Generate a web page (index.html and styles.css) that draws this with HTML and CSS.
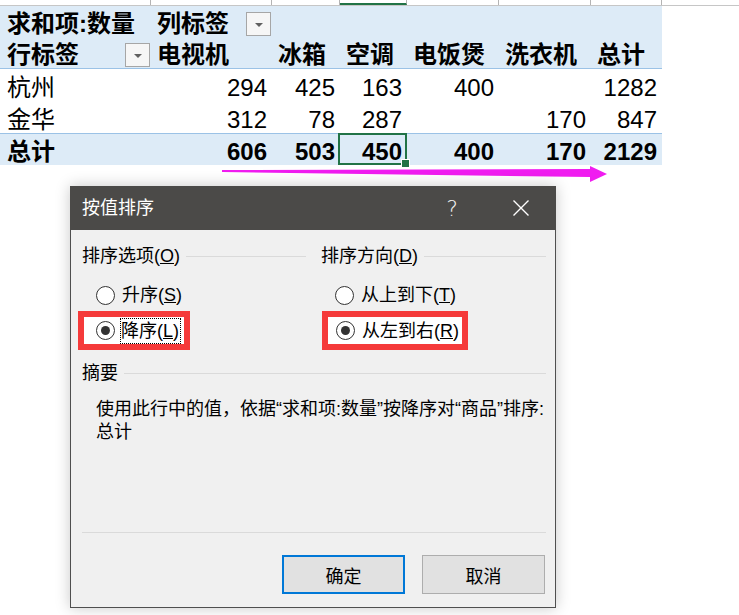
FILE: index.html
```html
<!DOCTYPE html>
<html lang="zh-CN">
<head>
<meta charset="utf-8">
<title>按值排序</title>
<link rel="stylesheet" href="styles.css">
</head>
<body>
<div class="sheet">
  <div class="colheads">
    <div></div><div></div><div></div><div class="sel"></div><div></div><div></div><div></div><div class="last"></div>
  </div>
  <div class="pivot">
    <div class="prow blue first">
      <div class="cell b">求和项:数量</div>
      <div class="cell b ddcell">列标签<span class="dd"></span></div>
      <div class="cell"></div><div class="cell"></div><div class="cell"></div><div class="cell"></div><div class="cell"></div>
    </div>
    <div class="prow blue hdr">
      <div class="cell b ddcell">行标签<span class="dd"></span></div>
      <div class="cell b">电视机</div>
      <div class="cell b">冰箱</div>
      <div class="cell b">空调</div>
      <div class="cell b">电饭煲</div>
      <div class="cell b">洗衣机</div>
      <div class="cell b">总计</div>
    </div>
    <div class="prow">
      <div class="cell">杭州</div>
      <div class="cell num">294</div>
      <div class="cell num">425</div>
      <div class="cell num">163</div>
      <div class="cell num">400</div>
      <div class="cell num"></div>
      <div class="cell num">1282</div>
    </div>
    <div class="prow">
      <div class="cell">金华</div>
      <div class="cell num">312</div>
      <div class="cell num">78</div>
      <div class="cell num">287</div>
      <div class="cell num"></div>
      <div class="cell num">170</div>
      <div class="cell num">847</div>
    </div>
    <div class="prow blue total">
      <div class="cell">总计</div>
      <div class="cell num">606</div>
      <div class="cell num">503</div>
      <div class="cell num active">450</div>
      <div class="cell num">400</div>
      <div class="cell num">170</div>
      <div class="cell num">2129</div>
    </div>
  </div>
</div>

<svg class="arrow" width="739" height="200" viewBox="0 0 739 200" aria-hidden="true">
  <polygon points="222,170 590,169 590,166 607,174 590,182 590,177 222,172" fill="#f01cf0"/>
</svg>

<div class="dialog">
  <div class="titlebar">
    <span class="title">按值排序</span>
    <span class="help">?</span>
    <span class="close">
      <svg width="18" height="18" viewBox="0 0 18 18"><path d="M1.5 1.5 L16.5 16.5 M16.5 1.5 L1.5 16.5" stroke="#fff" stroke-width="1.4" fill="none"/></svg>
    </span>
  </div>
  <div class="dbody">
    <div class="groups">
      <div class="group">
        <div class="ghead">排序选项(<u>O</u>)</div>
        <div class="radios">
          <div class="radio"><span class="circle"></span><span class="lbl">升序(<u>S</u>)</span></div>
          <div class="radio marked left-mark"><span class="circle on"></span><span class="lbl focus">降序(<u>L</u>)</span></div>
        </div>
      </div>
      <div class="group">
        <div class="ghead">排序方向(<u>D</u>)</div>
        <div class="radios">
          <div class="radio"><span class="circle"></span><span class="lbl">从上到下(<u>T</u>)</span></div>
          <div class="radio marked right-mark"><span class="circle on"></span><span class="lbl">从左到右(<u>R</u>)</span></div>
        </div>
      </div>
    </div>
    <div class="ghead sumhead">摘要</div>
    <div class="desc">
      <div>使用此行中的值，依据“求和项:数量”按降序对“商品”排序:</div>
      <div>总计</div>
    </div>
    <div class="sep"></div>
    <div class="buttons">
      <div class="btn primary">确定</div>
      <div class="btn">取消</div>
    </div>
  </div>
</div>
</body>
</html>
```

FILE: styles.css
```css
* { box-sizing: border-box; }

body {
  margin: 0;
  width: 739px;
  height: 615px;
  overflow: hidden;
  position: relative;
  background: #fff;
  font-family: "Liberation Sans", "Noto Sans CJK SC", sans-serif;
  color: #000;
}

.colheads {
  display: grid;
  grid-template-columns: 151px 121px 68px 67px 92px 92px 71px 1fr;
  height: 6px;
  border-bottom: 1px solid #c6c6c6;
  background: #fff;
}
.colheads > div { border-right: 1px solid #b4b4b4; }
.colheads > .last { border-right: 0; }
.colheads > .sel { border-bottom: 2px solid #217346; }

.pivot {
  width: 662px;
  font-size: 24px;
}

.prow {
  display: grid;
  grid-template-columns: 151px 121px 68px 67px 92px 92px 71px;
  height: 32px;
}
.prow.blue { background: #ddebf7; }
.prow.first { height: 31px; }
.prow.hdr { border-bottom: 1px solid #9bc2e6; }
.prow.total { border-top: 1px solid #9bc2e6; height: 32px; font-weight: bold; }

.cell {
  display: flex;
  align-items: flex-end;
  padding: 0 6px 0 6px;
  line-height: 26px;
  white-space: nowrap;
  position: relative;
}
.prow .cell:first-child { padding-left: 7px; }
.cell.b { font-weight: bold; }
.cell.num { justify-content: flex-end; padding-right: 5px; }

.ddcell { padding-right: 1px; }
.dd {
  margin-left: auto;
  align-self: flex-end;
  width: 25px;
  height: 24px;
  margin-bottom: 1px;
  border: 1px solid #a6a6a6;
  background: #f6f6f6;
  display: flex;
  align-items: center;
  justify-content: center;
}
.dd::after {
  content: "";
  border-left: 4px solid transparent;
  border-right: 4px solid transparent;
  border-top: 4px solid #606060;
  margin-top: 1px;
}

.cell.active::after {
  content: "";
  position: absolute;
  left: -2px;
  top: -1px;
  right: 0;
  bottom: 0;
  border: 2px solid #217346;
}
.cell.active::before {
  content: "";
  position: absolute;
  right: -3px;
  bottom: -3px;
  width: 7px;
  height: 7px;
  background: #217346;
  border: 1px solid #fff;
  z-index: 2;
}

.arrow {
  position: absolute;
  left: 0;
  top: 0;
  pointer-events: none;
}

.dialog {
  position: absolute;
  left: 70px;
  top: 186px;
  width: 486px;
  box-shadow: 0 0 14px rgba(0, 0, 0, 0.22);
  font-size: 18px;
}

.titlebar {
  height: 44px;
  background: #4b4a48;
  color: #fff;
  display: flex;
  align-items: center;
  padding-left: 12px;
}
.title { flex: 1; line-height: 24px; }
.help {
  width: 40px;
  text-align: center;
  margin-right: 26px;
  font-size: 22px;
  font-family: "DejaVu Sans", "Liberation Sans", sans-serif;
  font-weight: 300;
  color: #f2f2f2;
}
.close {
  width: 46px;
  margin-right: 12px;
  display: flex;
  justify-content: center;
  align-items: center;
}

.dbody {
  background: #f0f0f0;
  border: 1px solid #4f4f4f;
  border-top: 0;
  padding: 14px 9px 13px 11px;
}

.groups {
  display: grid;
  grid-template-columns: 224px 225px;
  column-gap: 15px;
}

.ghead {
  display: flex;
  align-items: center;
  height: 24px;
  line-height: 24px;
  white-space: nowrap;
}
.ghead::after {
  content: "";
  flex: 1;
  height: 1px;
  background: #dadada;
  margin-left: 6px;
}

.radios { margin-top: 9px; }

.radio {
  display: flex;
  align-items: center;
  height: 36px;
  padding-left: 14px;
  line-height: 24px;
  white-space: nowrap;
}
.circle {
  width: 19px;
  height: 19px;
  border-radius: 50%;
  border: 1px solid #333;
  background: #fff;
  margin-right: 7px;
  display: flex;
  align-items: center;
  justify-content: center;
  flex: none;
}
.circle.on::after {
  content: "";
  width: 9px;
  height: 9px;
  border-radius: 50%;
  background: #333;
}

.radio.marked {
  width: fit-content;
  height: 39px;
  margin-top: -2px;
  border: 6px solid #f53a3a;
  background: #fff;
}
.left-mark { margin-left: -4px; padding-left: 12px; padding-right: 4px; }
.right-mark { margin-left: 1px; padding-left: 8px; padding-right: 3px; }

.lbl.focus {
  outline: 1px dotted #000;
  padding: 0 1px 0 0;
  margin-left: -1px;
}

.sumhead { margin-top: 11px; }

.desc {
  margin-top: 13px;
  padding-left: 14px;
  line-height: 23px;
  white-space: nowrap;
}

.sep {
  margin-top: 88px;
  height: 1px;
  background: #dadada;
}

.buttons {
  display: flex;
  justify-content: flex-end;
  gap: 17px;
  margin-top: 22px;
  padding-right: 1px;
}
.btn {
  width: 123px;
  height: 39px;
  background: #e1e1e1;
  border: 1px solid #adadad;
  display: flex;
  align-items: center;
  justify-content: center;
}
.btn.primary { border: 2px solid #0078d7; }
```
